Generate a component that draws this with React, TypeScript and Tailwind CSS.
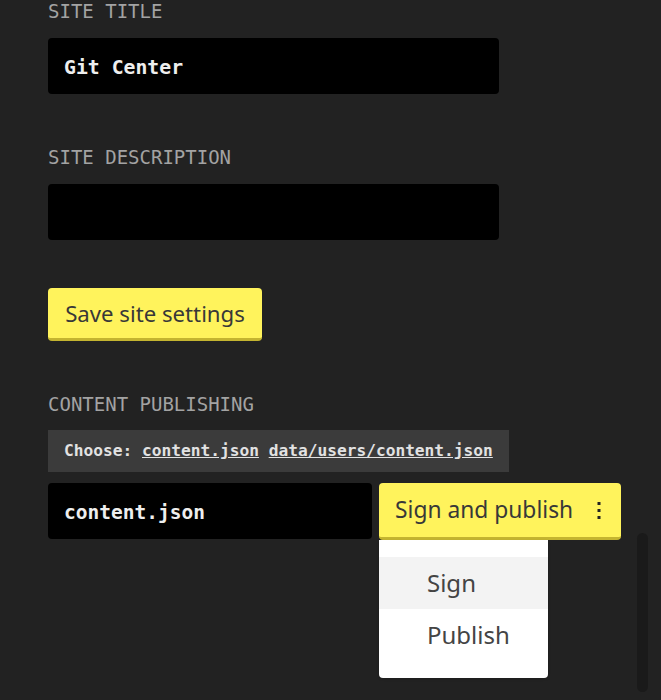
import React, { useState } from "react";

const mono = "font-['DejaVu_Sans_Mono','Liberation_Mono',monospace]";
const sans = "font-['Noto_Sans','Open_Sans',sans-serif]";

const Label = ({ text, className }: { text: string; className?: string }) => (
  <div className={`${mono} text-[19px] leading-[23px] text-[#a3a3a3] uppercase ${className ?? ""}`}>
    {text}
  </div>
);

const App = () => {
  const [title, setTitle] = useState("Git Center");
  const [description, setDescription] = useState("");
  const [file, setFile] = useState("content.json");
  const [menuOpen, setMenuOpen] = useState(true);
  const files = ["content.json", "data/users/content.json"];

  return (
    <div className="relative w-[661px] h-[700px] overflow-hidden bg-[#222222] pl-12">
      <Label text="Site title" />
      <input
        className={`${mono} mt-[15px] block w-[451px] h-[56px] rounded-[4px] bg-black px-4 pt-[3px] text-[19.8px] font-bold text-[#eeeeee] outline-none`}
        value={title}
        onChange={(e) => setTitle(e.target.value)}
      />

      <Label text="Site description" className="mt-[52px]" />
      <input
        className={`${mono} mt-[15px] block w-[451px] h-[56px] rounded-[4px] bg-black px-4 pt-[3px] text-[19.8px] font-bold text-[#eeeeee] outline-none`}
        value={description}
        onChange={(e) => setDescription(e.target.value)}
      />

      <button
        className={`${sans} mt-[48px] block w-[214px] h-[53px] rounded-[4px] border-b-[3px] border-[#c4b430] bg-[#fff35c] pt-[2px] text-[22.2px] text-[#383838]`}
      >
        Save site settings
      </button>

      <Label text="Content publishing" className="mt-[52px]" />
      <div
        className={`${mono} mt-[14px] inline-block h-[42px] bg-[#3b3b3b] px-4 text-[16.2px] leading-[42px] font-bold text-[#e2e2e2]`}
      >
        Choose:{" "}
        {files.map((f, idx) => (
          <React.Fragment key={f}>
            <a className="underline cursor-pointer" onClick={() => setFile(f)}>
              {f}
            </a>
            {idx < files.length - 1 ? " " : ""}
          </React.Fragment>
        ))}
      </div>

      <div className="mt-[11px] flex gap-[7px]">
        <input
          className={`${mono} block w-[324px] h-[56px] rounded-[4px] bg-black px-4 pt-[3px] text-[19.5px] font-bold text-[#eeeeee] outline-none`}
          value={file}
          onChange={(e) => setFile(e.target.value)}
        />
        <div className="relative">
          <button
            onClick={() => setMenuOpen(!menuOpen)}
            className={`${sans} flex items-center w-[242px] h-[57px] rounded-[4px] border-b-[3px] border-[#c4b430] bg-[#fff35c] pl-[16px] text-[22.8px] text-[#383838]`}
          >
            Sign and publish
            <svg width="4" height="18" viewBox="0 0 4 18" className="ml-[24px]">
              <rect x="0.5" y="1" width="3" height="3" fill="#222" />
              <rect x="0.5" y="8" width="3" height="3" fill="#222" />
              <rect x="0.5" y="15" width="3" height="3" fill="#222" />
            </svg>
          </button>
          {menuOpen && (
            <div className={`${sans} absolute left-0 top-[57px] w-[169px] rounded-b-[4px] bg-white py-[17px] text-[24px] text-[#444444] shadow-sm`}>
              <div className="h-[52px] bg-[#f3f3f3] pl-12 leading-[52px]">Sign</div>
              <div className="h-[52px] pl-12 leading-[52px]">Publish</div>
            </div>
          )}
        </div>
      </div>

      {/* scrollbar */}
      <div className="absolute left-[637px] top-[533px] h-[159px] w-[11px] rounded-full bg-[#1a1a1a]" />
    </div>
  );
};

export default App;
